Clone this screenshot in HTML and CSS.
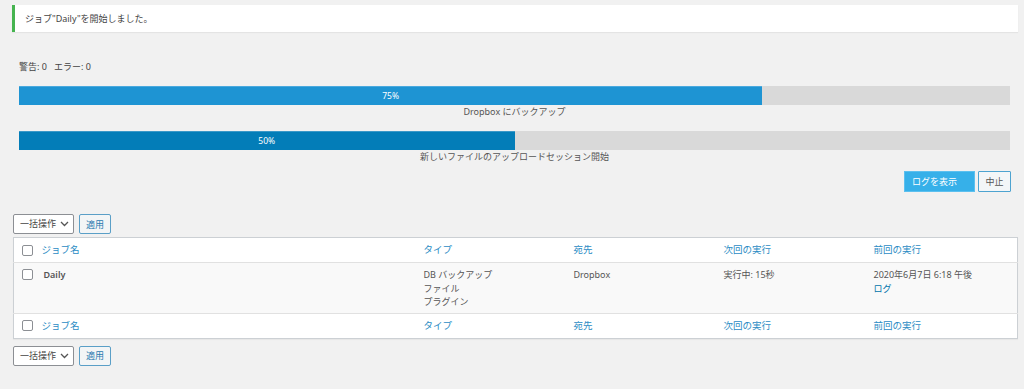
FILE: index.html
```html
<!DOCTYPE html>
<html lang="ja">
<head>
<meta charset="utf-8">
<link rel="stylesheet" href="styles.css">
</head>
<body>
<div class="wrap">
  <div class="notice">ジョブ"Daily"を開始しました。</div>

  <div class="progress-area">
    <div class="counts">警告: 0&nbsp;&nbsp;&nbsp;エラー: 0</div>
    <div class="bar"><div class="fill fill1" style="width:75%">75%</div></div>
    <div class="bar-label">Dropbox にバックアップ</div>
    <div class="bar bar2"><div class="fill fill2" style="width:50%">50%</div></div>
    <div class="bar-label">新しいファイルのアップロードセッション開始</div>
    <div class="actions">
      <button class="btn-primary">ログを表示</button>
      <button class="btn-secondary">中止</button>
    </div>
  </div>

  <div class="tablenav top">
    <div class="select">一括操作
      <svg width="9" height="6" viewBox="0 0 9 6"><path d="M1 1l3.5 3.5L8 1" fill="none" stroke="#555" stroke-width="1.3"/></svg>
    </div>
    <button class="apply">適用</button>
  </div>

  <table class="list">
    <colgroup>
      <col class="c-check"><col class="c-name"><col class="c-col"><col class="c-col"><col class="c-col"><col class="c-col">
    </colgroup>
    <thead>
      <tr>
        <th class="check"><span class="cb"></span></th>
        <th>ジョブ名</th>
        <th>タイプ</th>
        <th>宛先</th>
        <th>次回の実行</th>
        <th>前回の実行</th>
      </tr>
    </thead>
    <tbody>
      <tr>
        <td class="check"><span class="cb"></span></td>
        <td class="name">Daily</td>
        <td>DB バックアップ<br>ファイル<br>プラグイン</td>
        <td>Dropbox</td>
        <td>実行中: 15秒</td>
        <td>2020年6月7日 6:18 午後<br><a class="log">ログ</a></td>
      </tr>
    </tbody>
    <tfoot>
      <tr>
        <th class="check"><span class="cb"></span></th>
        <th>ジョブ名</th>
        <th>タイプ</th>
        <th>宛先</th>
        <th>次回の実行</th>
        <th>前回の実行</th>
      </tr>
    </tfoot>
  </table>

  <div class="tablenav bottom">
    <div class="select">一括操作
      <svg width="9" height="6" viewBox="0 0 9 6"><path d="M1 1l3.5 3.5L8 1" fill="none" stroke="#555" stroke-width="1.3"/></svg>
    </div>
    <button class="apply">適用</button>
  </div>
</div>
</body>
</html>
```

FILE: styles.css
```css
* { box-sizing: border-box; }
html, body {
  margin: 0;
  padding: 0;
  background: #f1f1f1;
}
body {
  font-family: "Noto Sans", "Noto Sans CJK JP", sans-serif;
  font-size: 9px;
  color: #444;
  line-height: 13.5px;
}
.wrap {
  padding: 5px 6px 0 12px;
}
.notice {
  background: #fff;
  border-left: 3px solid #46b450;
  box-shadow: 0 1px 1px rgba(0,0,0,0.05);
  height: 27px;
  display: flex;
  align-items: center;
  padding-left: 10px;
  color: #444;
}
.progress-area {
  padding: 28px 8px 0 7px;
}
.counts {
  height: 14px;
  line-height: 14px;
  color: #444;
}
.bar {
  margin-top: 12px;
  height: 19px;
  background: #d9d9d9;
  display: flex;
}
.bar2 { margin-top: 13px; }
.fill {
  height: 100%;
  color: #fff;
  text-align: center;
  font-size: 8.5px;
}
.fill1 { background: #1e94d3; border-top: 1px solid #4aa9de; line-height: 18px; }
.fill2 { background: #037db8; border-top: 1px solid #3a98c8; line-height: 18px; }
.bar-label {
  text-align: center;
  height: 13px;
  line-height: 13px;
  color: #555;
}
.actions {
  margin-top: 8px;
  display: flex;
  justify-content: flex-end;
  gap: 3px;
  margin-right: -1px;
}
button {
  font-family: inherit;
  font-size: 9px;
  margin: 0;
  cursor: pointer;
}
.btn-primary {
  height: 21px;
  width: 71px;
  background: #36b0e9;
  color: #fff;
  border: 1px solid #5cc0ef;
  padding: 0 0 0 7px;
  text-align: left;
  border-radius: 0;
}
.btn-secondary {
  height: 21px;
  width: 33px;
  background: #f3f6f8;
  color: #555;
  border: 1px solid #4da3d0;
  padding: 0;
  border-radius: 1px;
}
.tablenav {
  display: flex;
  gap: 5px;
  align-items: center;
  padding-left: 1px;
}
.tablenav.top { margin-top: 22px; height: 20px; }
.tablenav.bottom { margin-top: 7px; height: 20px; }
.select {
  width: 61px;
  height: 20px;
  background: #fff;
  border: 1px solid #8c8f94;
  border-radius: 2px;
  display: flex;
  align-items: center;
  justify-content: space-between;
  padding: 0 4px 0 6px;
  color: #444;
}
.apply {
  height: 20px;
  width: 32px;
  padding: 0;
  background: #f3f5f6;
  border: 1px solid #5a9fc7;
  border-radius: 2px;
  color: #2a7ab0;
}
.list {
  margin-top: 3px;
  margin-left: 1px;
  width: 1005px;
  border-collapse: collapse;
  background: #fff;
  border: 1px solid #ccd0d4;
  box-shadow: 0 1px 1px rgba(0,0,0,0.04);
  table-layout: fixed;
}
.c-check { width: 22px; }
.c-name { width: 382px; }
.c-col { width: 150px; }
th, td {
  text-align: left;
  vertical-align: top;
  font-weight: normal;
  padding: 0 6px;
}
thead th, tfoot th {
  height: 25px;
  vertical-align: middle;
  color: #2b8cc4;
  font-size: 9.5px;
}
thead tr { border-bottom: 1px solid #e1e1e1; }
tfoot tr { border-top: 1px solid #e1e1e1; }
tbody tr { background: #f9f9f9; }
tbody td {
  height: 49px;
  padding-top: 5px;
  padding-bottom: 4px;
  color: #555;
}
th.check, td.check {
  padding: 0 0 0 8px;
}
thead th.check, tfoot th.check { vertical-align: middle; }
td.check { padding-top: 6px; }
.cb {
  display: block;
  width: 11px;
  height: 11px;
  border: 1px solid #8c8f94;
  border-radius: 2px;
  background: #fff;
}
td.name {
  padding-left: 8px;
  font-weight: 600;
  color: #555;
}
.log { color: #0073aa; }
```
